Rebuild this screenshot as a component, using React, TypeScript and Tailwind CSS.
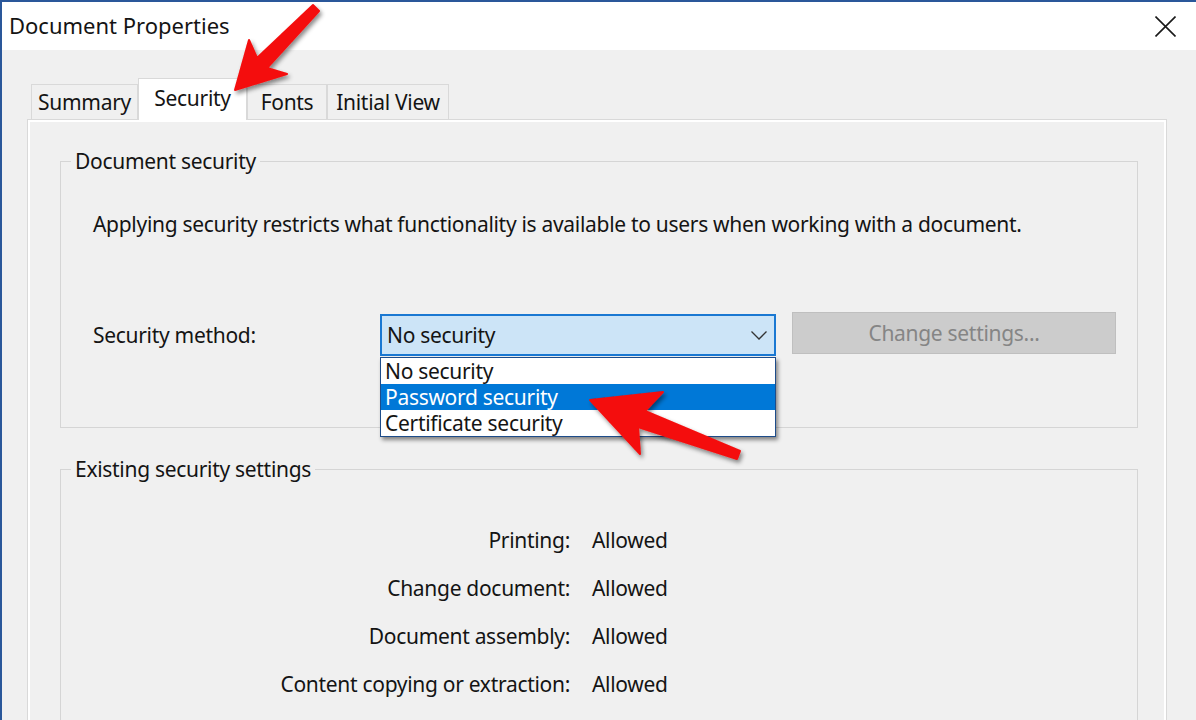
import React from "react";

function Tab({ label, selected, w }: { label: string; selected?: boolean; w: string }) {
  if (selected) {
    return (
      <div className={`${w} h-[42px] -mb-px relative z-10 bg-white border border-b-0 border-[#d9d9d9] flex items-center justify-center text-[21px] leading-none pb-[2px]`}>
        {label}
      </div>
    );
  }
  return (
    <div className={`${w} h-[35px] bg-[#f0f0f0] border border-b-0 border-[#d9d9d9] flex items-center justify-center text-[21px] leading-none`}>
      {label}
    </div>
  );
}

function Row({ label }: { label: string }) {
  return (
    <div className="h-[48px] flex items-center text-[21px] leading-[24px]">
      <span className="w-[509px] text-right">{label}</span>
      <span className="ml-[22px]">Allowed</span>
    </div>
  );
}

export default function App() {
  return (
    <div className="relative w-[1196px] h-[720px] overflow-hidden bg-[#f0f0f0] border-t-2 border-l-2 border-[#2a579a] font-['Noto_Sans',sans-serif] text-[#141414]">
      {/* Title bar */}
      <div className="h-[48px] bg-white flex items-center justify-between pl-[7px] pr-[20px]">
        <span className="text-[22px] leading-none -mt-[2px]">Document Properties</span>
        <svg width="21" height="21" viewBox="0 0 21 21">
          <path d="M0.5 0.5L20.5 20.5M20.5 0.5L0.5 20.5" stroke="#1a1a1a" strokeWidth="1.6" fill="none" />
        </svg>
      </div>

      {/* Body */}
      <div className="pl-[25px] pt-[28px] tracking-[-0.3px]">
        <div className="flex items-end h-[41px] pl-[4px]">
          <Tab label="Summary" w="w-[107px]" />
          <Tab label="Security" w="w-[109px]" selected />
          <Tab label="Fonts" w="w-[80px]" />
          <Tab label="Initial View" w="w-[122px]" />
        </div>

        <div className="w-[1140px] h-[620px] border border-[#d9d9d9] bg-[#f0f0f0] shadow-[inset_0_0_0_2px_#ffffff] pl-[32px] pt-[29px]">
          {/* Document security group */}
          <fieldset className="w-[1078px] border border-[#d5d5d5]">
            <legend className="ml-[10px] px-[4px] text-[21px] leading-[24px]">Document security</legend>
            <div className="pl-[32px] pt-[39px] pb-[71px]">
              <p className="text-[21px] leading-[24px]">
                Applying security restricts what functionality is available to users when working with a document.
              </p>
              <div className="mt-[78px] flex items-center h-[42px] text-[21px]">
                <span className="w-[287px] leading-[24px]">Security method:</span>
                <div className="relative w-[396px] h-[42px]">
                  <div className="h-full border-2 border-[#1a78d2] bg-[#cce4f7] flex items-center justify-between pl-[5px] pr-[7px]">
                    <span className="leading-[24px]">No security</span>
                    <svg width="16" height="9" viewBox="0 0 16 9">
                      <path d="M0.5 0.5L8 8L15.5 0.5" stroke="#333" strokeWidth="1.3" fill="none" />
                    </svg>
                  </div>
                  <div className="absolute left-0 top-[43px] z-20 w-[396px] bg-white border border-[#1d4c8a] shadow-[2px_3px_4px_rgba(0,0,0,0.45)]">
                    <div className="h-[26px] pl-[4px] flex items-center leading-[24px]">No security</div>
                    <div className="h-[26px] pl-[4px] flex items-center leading-[24px] bg-[#0078d7] text-white">Password security</div>
                    <div className="h-[26px] pl-[4px] flex items-center leading-[24px]">Certificate security</div>
                  </div>
                </div>
                <div className="self-start -mt-[2px] ml-[16px] w-[324px] h-[42px] bg-[#cccccc] border border-[#bfbfbf] flex items-center justify-center text-[#858585] leading-[24px]">
                  Change settings...
                </div>
              </div>
            </div>
          </fieldset>

          {/* Existing security settings group */}
          <fieldset className="mt-[29px] w-[1078px] border border-[#d5d5d5]">
            <legend className="ml-[10px] px-[4px] text-[21px] leading-[24px]">Existing security settings</legend>
            <div className="pt-[35px] pb-[40px]">
              <Row label="Printing:" />
              <Row label="Change document:" />
              <Row label="Document assembly:" />
              <Row label="Content copying or extraction:" />
            </div>
          </fieldset>
        </div>
      </div>

      {/* Red annotation arrows */}
      <svg className="absolute left-0 top-0 pointer-events-none z-30" width="1196" height="720" viewBox="0 0 1196 720">
        <defs>
          <filter id="sh" x="-20%" y="-20%" width="140%" height="140%">
            <feDropShadow dx="2" dy="3" stdDeviation="2" floodColor="#000" floodOpacity="0.45" />
          </filter>
        </defs>
        <polygon
          points="233,88 247,38 255,56 311,3 317,9 265,66 285,72"
          fill="#f40b0b"
          stroke="#f40b0b"
          strokeWidth="2"
          strokeLinejoin="round"
          filter="url(#sh)"
        />
        <polygon
          points="588,398 661,390 643,409 738,449 735,457 636,425 638,452"
          fill="#f40b0b"
          stroke="#f40b0b"
          strokeWidth="2"
          strokeLinejoin="round"
          filter="url(#sh)"
        />
      </svg>
    </div>
  );
}
